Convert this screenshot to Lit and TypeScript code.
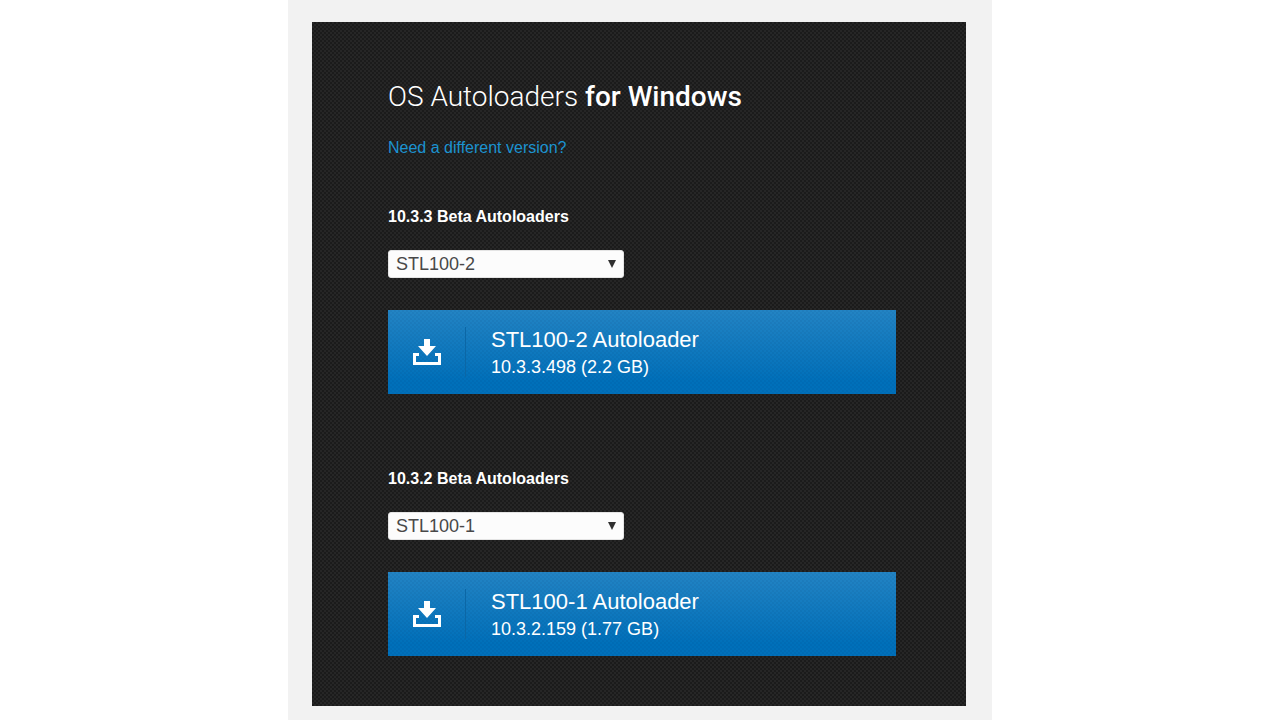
import { LitElement, html, css } from "lit";
import { customElement, property, state } from "lit/decorators.js";

interface Release {
  branch: string;
  build: string;
  size: string;
  selected: string;
}

const DEVICES = ["STL100-1", "STL100-2", "STL100-3", "STL100-4"];

const RELEASES: Release[] = [
  { branch: "10.3.3", build: "10.3.3.498", size: "2.2 GB", selected: "STL100-2" },
  { branch: "10.3.2", build: "10.3.2.159", size: "1.77 GB", selected: "STL100-1" },
];

@customElement("autoloader-section")
export class AutoloaderSection extends LitElement {
  @property({ attribute: false }) release!: Release;
  @state() private device = "";

  static styles = css`
    :host {
      display: block;
    }
    .title {
      display: block;
      margin-bottom: 23px;
      color: #fff;
      font-size: 16px;
      font-weight: 700;
      line-height: 20px;
    }
    .picker {
      position: relative;
      width: 236px;
      max-width: 100%;
      margin-bottom: 32px;
    }
    .select {
      display: block;
      appearance: none;
      box-sizing: border-box;
      width: 100%;
      height: 28px;
      margin: 0;
      padding: 0 28px 0 7px;
      border: 1px solid #e4e4e4;
      border-radius: 3px;
      background: #fcfcfc;
      color: #484848;
      font-family: inherit;
      font-size: 18px;
      line-height: 26px;
    }
    .arrow {
      position: absolute;
      top: 10px;
      right: 8px;
      width: 8px;
      height: 8px;
      fill: #303030;
      pointer-events: none;
    }
    .download {
      display: flex;
      align-items: center;
      box-sizing: border-box;
      min-height: 84px;
      background-image: repeating-conic-gradient(rgba(0, 20, 60, 0.05) 0 25%, transparent 0 50%),
        linear-gradient(#2384c4, #0070ba 85%);
      background-size: 4px 4px, 100% 100%;
      color: #fff;
      text-decoration: none;
    }
    .mark {
      display: flex;
      align-items: center;
      justify-content: center;
      box-sizing: border-box;
      width: 78px;
      height: 50px;
      padding-left: 1px;
      border-right: 1px solid #0b67a6;
    }
    .icon {
      width: 28px;
      height: 26px;
      fill: #fff;
    }
    .text {
      display: flex;
      flex-direction: column;
      padding: 2px 0 0 25px;
    }
    .name {
      font-size: 22px;
      line-height: 28px;
    }
    .detail {
      font-size: 18px;
      line-height: 26px;
    }
  `;

  render() {
    const r = this.release;
    const device = this.device || r.selected;
    return html`
      <label class="title" for="device">${r.branch} Beta Autoloaders</label>
      <div class="picker">
        <select
          class="select"
          id="device"
          @change=${(e: Event) => (this.device = (e.target as HTMLSelectElement).value)}
        >
          ${DEVICES.map((d) => html`<option value=${d} ?selected=${d === device}>${d}</option>`)}
        </select>
        <svg class="arrow" viewBox="0 0 8 8" aria-hidden="true"><path d="M0 0h8L4 8z" /></svg>
      </div>
      <a class="download" href="#download">
        <span class="mark">
          <svg class="icon" viewBox="0 0 28 26" aria-hidden="true">
            <path d="M11 0h6v7h6l-9 10-9-10h6z" />
            <path d="M0 14h6v3H3v6h22v-6h-3v-3h6v12H0z" />
          </svg>
        </span>
        <span class="text">
          <span class="name">${device} Autoloader</span>
          <span class="detail">${r.build} (${r.size})</span>
        </span>
      </a>
    `;
  }
}

@customElement("app-root")
export class AppRoot extends LitElement {
  static styles = css`
    :host {
      display: block;
      min-height: 100vh;
      background: #fff;
      font-family: "Liberation Sans", Arial, sans-serif;
    }
    .page {
      box-sizing: border-box;
      max-width: 704px;
      min-height: 100vh;
      margin: 0 auto;
      padding: 22px 26px 14px 24px;
      background: #f2f2f2;
    }
    .panel {
      padding: 55px 70px 50px 76px;
      background: repeating-conic-gradient(#1b1b1b 0 25%, #262626 0 50%) 0 0 / 4px 4px;
    }
    .heading {
      margin: 0 0 21px;
      color: #fff;
      font-family: Roboto, "Liberation Sans", sans-serif;
      font-size: 28px;
      font-weight: 300;
      line-height: 40px;
    }
    .strong {
      font-weight: 500;
    }
    .link {
      display: inline-block;
      margin-bottom: 49px;
      color: #1c93d1;
      font-size: 16px;
      line-height: 20px;
      text-decoration: none;
      vertical-align: top;
    }
    .sections {
      display: flex;
      flex-direction: column;
      gap: 75px;
    }
  `;

  render() {
    return html`
      <div class="page">
        <main class="panel">
          <h1 class="heading">OS Autoloaders <span class="strong">for Windows</span></h1>
          <a class="link" href="#versions">Need a different version?</a>
          <div class="sections">
            ${RELEASES.map((r) => html`<autoloader-section .release=${r}></autoloader-section>`)}
          </div>
        </main>
      </div>
    `;
  }
}
